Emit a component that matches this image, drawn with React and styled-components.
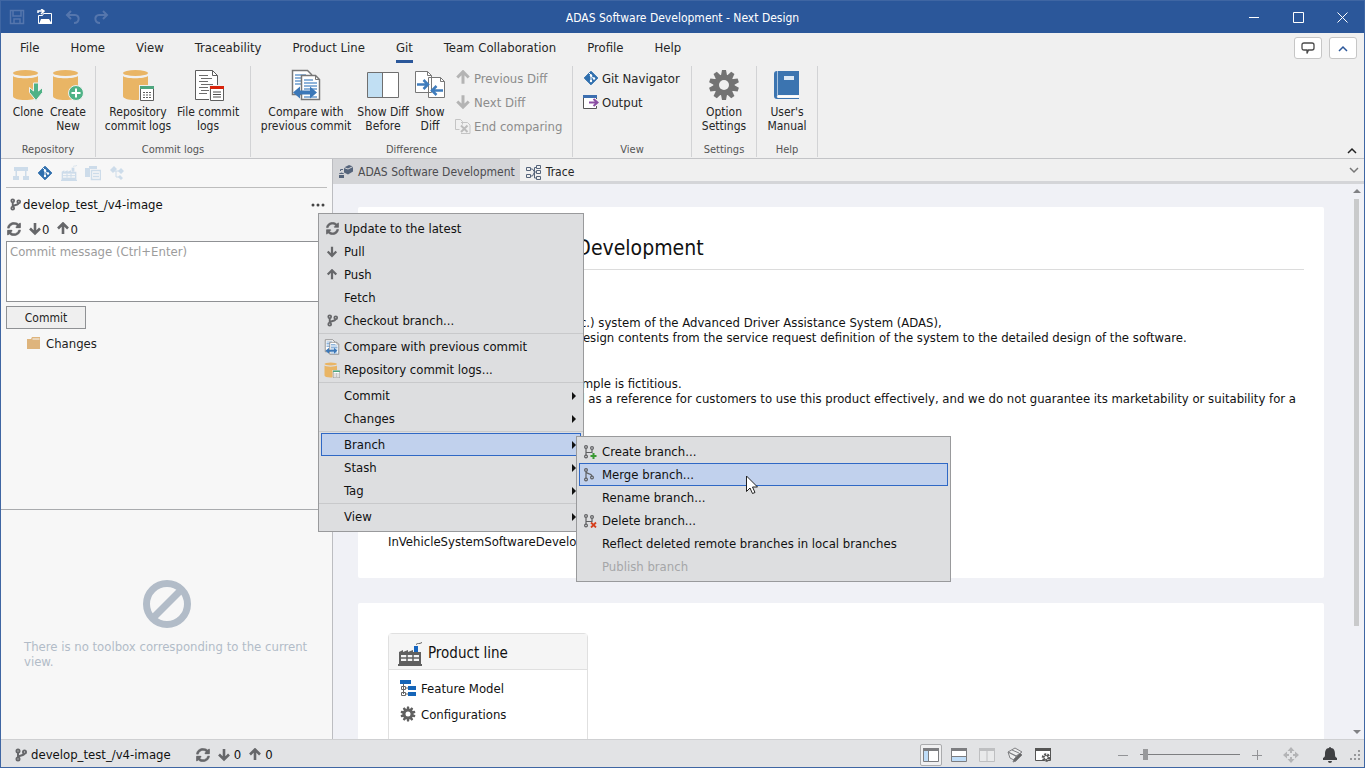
import React, {useState} from 'react';
import styled, {createGlobalStyle, css} from 'styled-components';

const GlobalStyle = createGlobalStyle`
    * {
        box-sizing: border-box;
    }
    body {
        margin: 0;
        font-family: "DejaVu Sans Condensed", "Open Sans", sans-serif;
        font-size: 13px;
        line-height: 15px;
        color: #1e1e1e;
    }
    button, input, textarea {
        font: inherit;
        color: inherit;
    }
    button {
        padding: 0;
        border: 0;
        background: none;
    }
    svg {
        display: block;
        flex: none;
    }
`;

/*********************************************
 window frame and title bar
 ********************************************/
const Window = styled.div`
    display: flex;
    flex-direction: column;
    height: 100vh;
    border: 1px solid #3f66a3;
    background: #f0f0f0;
    overflow: hidden;
`;

const TitleBar = styled.header`
    display: grid;
    grid-template-columns: 1fr auto 1fr;
    align-items: center;
    height: 32px;
    flex: none;
    background: #2b579a;
    color: white;
`;

const QuickAccess = styled.div`
    display: flex;
    gap: 12px;
    padding-left: 8px;
`;

const WindowTitle = styled.div`
    padding-top: 2px;
    font-size: 12px;
`;

const WindowButtons = styled.div`
    display: flex;
    justify-content: flex-end;
`;

const WindowButton = styled.button`
    display: flex;
    align-items: center;
    justify-content: center;
    width: 44px;
    height: 32px;
`;

/*********************************************
 ribbon
 ********************************************/
const MenuBar = styled.nav`
    display: flex;
    align-items: center;
    height: 30px;
    flex: none;
    padding: 0 7px 0 19px;
    gap: 31px;
`;

const MenuTab = styled.a`
    height: 30px;
    line-height: 29px;
    color: #262626;
    text-decoration: none;
    border-bottom: 3px solid ${({$active}) => $active ? '#2b579a' : 'transparent'};
`;

const MenuBarTools = styled.div`
    display: flex;
    gap: 7px;
    margin-left: auto;
`;

const RoundButton = styled.button`
    display: flex;
    align-items: center;
    justify-content: center;
    width: 28px;
    height: 22px;
    border: 1px solid #c6c6c6;
    border-radius: 3px;
    background: white;
`;

const Ribbon = styled.div`
    display: flex;
    height: 96px;
    flex: none;
    padding-top: 3px;
    border-bottom: 1px solid #c3c4c7;
`;

const RibbonGroup = styled.section`
    display: flex;
    flex-direction: column;
    width: ${({$width}) => $width}px;
    height: 91px;
    border-right: 1px solid #d2d3d5;
`;

const GroupContent = styled.div`
    display: flex;
    justify-content: center;
    flex: 1;
`;

const GroupLabel = styled.div`
    text-align: center;
    font-size: 11px;
    color: #555;
`;

const BigButton = styled.button`
    display: flex;
    flex-direction: column;
    align-items: center;
    align-self: flex-start;
    gap: 4px;
    width: ${({$width}) => $width}px;
    padding-top: 3px;
    font-size: 12px;
    line-height: 14px;
    white-space: pre;
    color: #262626;
`;

const SmallButtons = styled.div`
    display: flex;
    flex-direction: column;
    flex: 1;
    padding-left: ${({$indent}) => $indent || 0}px;
`;

const SmallButton = styled.button`
    display: flex;
    align-items: center;
    gap: 3px;
    height: 24px;
    white-space: nowrap;
    color: #262626;

    &:disabled {
        color: #8c8c8c;
    }
`;

const RibbonCollapse = styled.button`
    align-self: flex-end;
    margin: 0 7px 4px auto;
`;

/*********************************************
 left panel
 ********************************************/
const Body = styled.div`
    display: flex;
    flex: 1;
    min-height: 0;
`;

const SidePanel = styled.aside`
    display: flex;
    flex-direction: column;
    width: 332px;
    flex: none;
    border-right: 1px solid #bcbdc1;
    background: #f7f7f7;
`;

const PanelTop = styled.div`
    height: 351px;
    flex: none;
    padding: 0 5px;
    border-bottom: 1px solid #a9abae;
`;

const PanelTabs = styled.div`
    display: flex;
    align-items: center;
    gap: 8px;
    height: 29px;
    padding-left: 7px;
    border-bottom: 1px solid #bdbdbd;
`;

const BranchRow = styled.div`
    position: relative;
    display: flex;
    align-items: center;
    gap: 1px;
    height: 33px;
    padding: 0 1px 0 3px;
    color: #111;
`;

const MoreButton = styled.button`
    margin-left: auto;
    padding-right: 1px;
`;

const SyncRow = styled.div`
    display: flex;
    align-items: center;
    gap: 7px;
    height: 16px;
    margin-bottom: 4px;
    padding-left: 1px;
`;

const SyncItem = styled.span`
    display: flex;
    align-items: center;
    gap: ${({$gap}) => $gap || 0}px;
`;

const CommitMessage = styled.textarea`
    display: block;
    width: 100%;
    height: 61px;
    padding: 2px 3px;
    border: 1px solid #8f9194;
    background: white;
    resize: none;

    &::placeholder {
        color: #9c9c9c;
    }
`;

const CommitButton = styled.button`
    display: block;
    width: 80px;
    height: 23px;
    margin-top: 4px;
    padding-top: 2px;
    border: 1px solid #8f9194;
    background: #efefef;
    font-size: 12px;
`;

const ChangesRow = styled.div`
    display: flex;
    align-items: center;
    gap: 5px;
    height: 28px;
    padding-left: 21px;
`;

const Toolbox = styled.div`
    display: flex;
    flex-direction: column;
    align-items: center;
    gap: 11px;
    padding: 70px 20px 0 20px;
    color: #b2bcc8;
`;

const ToolboxNote = styled.div`
    width: 100%;
    padding-left: 3px;
`;

/*********************************************
 editor area
 ********************************************/
const Editor = styled.main`
    display: flex;
    flex-direction: column;
    flex: 1;
    min-width: 0;
    background: #f0f1f6;
`;

const TabStrip = styled.div`
    display: flex;
    align-items: center;
    height: 25px;
    flex: none;
    border-top: 1px solid #f0f0f0;
    border-bottom: 3px solid #d4d5d8;
    background: #f0f0f0;
`;

const EditorTab = styled.button`
    display: flex;
    align-items: center;
    gap: 5px;
    height: 23px;
    padding: 3px 5px 0 6px;
    font-size: 12px;
    color: ${({$active}) => $active ? '#4c4c50' : '#262626'};
    background: ${({$active}) => $active ? '#d4d5d8' : 'transparent'};
`;

const TabListButton = styled.button`
    margin-left: auto;
    padding-right: 5px;
`;

const EditorView = styled.div`
    display: flex;
    flex: 1;
    min-height: 0;
`;

const Pages = styled.div`
    flex: 1;
    min-width: 0;
    padding: 23px 25px 0;
    overflow: hidden;
`;

const Page = styled.article`
    height: 371px;
    margin-bottom: 25px;
    padding: 30px 20px 0 30px;
    border-radius: 2px;
    background: white;
    color: #111;
`;

const PageTitle = styled.h1`
    margin: 0 0 45px;
    padding: 1px 0 10px;
    border-bottom: 1px solid #dcdcdc;
    font-size: 21px;
    line-height: 21px;
    font-weight: 400;
`;

const Paragraph = styled.p`
    margin: 0 0 ${({$gap}) => $gap || 31}px;
    white-space: pre-line;
`;

const Card = styled.section`
    width: 200px;
    height: 140px;
    border: 1px solid #e0e0e0;
    border-radius: 4px;
`;

const CardHeader = styled.h2`
    display: flex;
    align-items: center;
    gap: 6px;
    height: 36px;
    margin: 0 0 5px;
    padding: 4px 9px 0;
    border-bottom: 1px solid #e0e0e0;
    background: #f5f5f5;
    font-size: 15px;
    font-weight: 400;
`;

const CardLink = styled.a`
    display: flex;
    align-items: center;
    gap: 5px;
    height: 26px;
    padding-left: 11px;
    color: inherit;
    text-decoration: none;
`;

const ScrollBar = styled.div`
    display: flex;
    flex-direction: column;
    align-items: center;
    width: 15px;
    padding: 5px 0;
`;

const ScrollThumb = styled.div`
    width: 5px;
    flex: 0 1 427px;
    margin: 6px 0 auto;
    background: #c9cacb;
`;

/*********************************************
 context menus
 ********************************************/
const menuBox = css`
    position: absolute;
    padding: 3px 2px;
    border: 1px solid #999a9c;
    background: #dddee0;
    list-style: none;
    margin: 0;
    z-index: 1;
`;

const ContextMenu = styled.ul`
    ${menuBox}
    top: 25px;
    left: 312px;
    width: 266px;
`;

const SubMenu = styled.ul`
    ${menuBox}
    top: 3px;
    left: 255px;
    width: 375px;
`;

const MenuEntry = styled.li`
    position: relative;
`;

const MenuButton = styled.button`
    display: grid;
    grid-template-columns: 22px 1fr 8px;
    align-items: center;
    width: 100%;
    height: 23px;
    border: 1px solid ${({$active}) => $active ? '#2f68c5' : 'transparent'};
    background: ${({$active}) => $active ? '#c1d1ed' : 'transparent'};
    text-align: left;
    white-space: nowrap;
    color: #111;

    &:disabled {
        color: #a5a6a8;
    }
`;

const MenuIcon = styled.span`
    display: flex;
    justify-content: center;
    width: 20px;
`;

const MenuSeparator = styled.li`
    height: 1px;
    margin: 1px -2px;
    background: #c8c9cb;
`;

const Pointer = styled.svg`
    position: absolute;
    top: 12px;
    left: 167px;
    z-index: 2;
`;

/*********************************************
 status bar
 ********************************************/
const StatusBar = styled.footer`
    display: flex;
    align-items: center;
    height: 28px;
    flex: none;
    padding: 2px 0 0 13px;
    border-top: 1px solid #cfd0d2;
    background: #e2e3e5;
    color: #111;
`;

const StatusGroup = styled.div`
    display: flex;
    align-items: center;
    gap: ${({$gap}) => $gap}px;
    margin-left: ${({$push}) => $push}px;
`;

const StatusBranch = styled.span`
    margin-left: 3px;
`;

const ViewButtons = styled.div`
    display: flex;
    margin-left: auto;
    gap: 6px;
`;

const ViewButton = styled.button`
    display: flex;
    align-items: center;
    justify-content: center;
    width: 22px;
    height: 22px;
    border: 1px solid ${({$active}) => $active ? '#aaabad' : 'transparent'};
    border-radius: 2px;
    background: ${({$active}) => $active ? '#f0f0f1' : 'transparent'};
`;

const ZoomSlider = styled.input`
    appearance: none;
    width: 100px;
    height: 12px;
    margin: 0 12px;
    background: linear-gradient(#7d7e80, #7d7e80) center / 100% 1px no-repeat;

    &::-webkit-slider-thumb {
        appearance: none;
        width: 5px;
        height: 11px;
        background: #98999b;
    }
`;

/*********************************************
 icons
 ********************************************/
const BranchIcon = ({size = 14}) => (
    <svg width={size} height={size} viewBox="0 0 14 14" fill="#66676a" stroke="#66676a" strokeWidth="2">
        <circle cx="4" cy="3" r="1.500"/>
        <circle cx="4" cy="11" r="1.500"/>
        <circle cx="10.500" cy="4" r="1.500"/>
        <path d="M4 3v8M10.500 5c0 3-5 2-6.500 4" fill="none"/>
        <path d="M3.500 2.500h1v1h-1zM10 3.500h1v1h-1zM3.500 10.500h1v1h-1z" fill="#e8e8e8" stroke="none"/>
    </svg>
);

const SyncIcon = ({size = 14}) => (
    <svg width={size} height={size} viewBox="0 0 512 512" fill="#66676a" stroke="#66676a" strokeWidth="14">
        <path d="M370.7 133.3C339.500 104 298.900 88 255.800 88c-77.500.1-144.300 53.200-162.800 126.900-1.300 5.400-6.100 9.200-11.700 9.200H24.100c-7.500 0-13.200-6.800-11.800-14.200C33.900 94.900 134.800 8 256 8c66.400 0 126.800 26.100 171.300 68.700L463 41c15.100-15.100 41-4.400 41 17v134c0 13.300-10.700 24-24 24H346c-21.400 0-32.100-25.900-17-41l41.700-41.700zM32 296h134c21.400 0 32.100 25.900 17 41l-41.800 41.800c31.300 29.300 71.800 45.300 114.900 45.200 77.400-.1 144.300-53.100 162.800-126.800 1.300-5.400 6.100-9.200 11.700-9.200h57.300c7.500 0 13.200 6.800 11.800 14.200C478.100 417.100 377.200 504 256 504c-66.400 0-126.800-26.100-171.300-68.700L49 471c-15.100 15.100-41 4.400-41-17V320c0-13.300 10.700-24 24-24z"/>
    </svg>
);

const ArrowIcon = ({up, size = 14, color = '#66676a'}) => (
    <svg width={size} height={size} viewBox="0 0 14 14" fill="none" stroke={color} strokeWidth="2.600">
        <path d={up ? 'M7 12V1M2 6.500l5-5 5 5' : 'M7 1v11M2 6.500l5 5 5-5'}/>
    </svg>
);

const Cylinder = ({children, size = 32}) => (
    <svg width={size} height={size} viewBox="0 0 32 32">
        <path d="M1 7v20c0 2.500 5 4 12 4s13-1.500 13-4V7c-3 3-23 3-25 0z" fill="#e9b565"/>
        <ellipse cx="13.500" cy="4" rx="12.500" ry="3" fill="#e9b565"/>
        {children}
    </svg>
);

const CloneIcon = () => (
    <Cylinder>
        <path d="M21.500 14h5v8l4-3.500v5L24 31.500 17.500 23.500v-5l4 3.500z" fill="#4fb286" stroke="#f0f0f0"/>
    </Cylinder>
);

const CreateIcon = () => (
    <Cylinder>
        <circle cx="24" cy="24" r="7.500" fill="#4fb286" stroke="#f0f0f0"/>
        <path d="M24 19.500v9M19.500 24h9" stroke="white" strokeWidth="2"/>
    </Cylinder>
);

const LogTable = ({color}) => (
    <g>
        <path d="M17 16h15v16H17z" fill="#f0f0f0"/>
        <path d="M18.500 18.500h13v13h-13z" fill="white" stroke="#5d5d5d"/>
        <path d="M18 17h14v3H18z" fill={color}/>
    </g>
);

const RepoLogIcon = ({size}) => (
    <Cylinder size={size}>
        <LogTable color="#4fa67f"/>
        <path d="M21 23.500h9M21 26h9M21 28.500h9" stroke="#5d5d5d" strokeDasharray="2 1"/>
    </Cylinder>
);

const FileLogIcon = () => (
    <svg width="32" height="32" viewBox="0 0 32 32">
        <path d="M3.500 1.500h17l5 5v24h-22z" fill="white" stroke="#5d5d5d"/>
        <path d="M20.500 1.500v5h5" fill="none" stroke="#5d5d5d"/>
        <path d="M7 6.500h9M9 9.500h11M7 12.500h9M9 15.500h12M7 18.500h9M9 21.500h8M7 24.500h8" stroke="#6c6c6c"/>
        <LogTable color="#d8230b"/>
        <path d="M21 23h8M21 25.500h8M21 28h8" stroke="#4d4d4d"/>
    </svg>
);

const CompareIcon = ({size = 32}) => (
    <svg width={size} height={size} viewBox="0 0 32 32">
        <path d="M2.500 1.500h15l4 4v20h-19z" fill="white" stroke="#777" strokeWidth="1.500"/>
        <path d="M5 6h11M5 9h11M5 12h8M5 15h8" stroke="#8fb4da" strokeWidth="2"/>
        <path d="M11.500 6.500h14l4 4v20h-18z" fill="white" stroke="#777" strokeWidth="1.500"/>
        <path d="M25.500 6.500v4h4" fill="none" stroke="#777"/>
        <path d="M14 11h9M14 14h13M14 17h13M14 20h13M14 28h13" stroke="#8fb4da" strokeWidth="2"/>
        <path d="M3 23.500l7-6v4h10v-4l7 6-7 6v-4H10v4z" fill="#3c78b8"/>
    </svg>
);

const DiffBeforeIcon = () => (
    <svg width="32" height="32" viewBox="0 0 32 32">
        <path d="M.5 3.500h31v25H.5z" fill="white" stroke="#6f6f6f"/>
        <path d="M1 4h15v24H1z" fill="#c1dff3"/>
        <path d="M15.500 3.500v25" stroke="#6f6f6f"/>
    </svg>
);

const ShowDiffIcon = () => (
    <svg width="32" height="32" viewBox="0 0 32 32">
        <path d="M1.500 2.500h12l4 4v17h-16zM14.500 8.500h12l4 4v16h-16z" fill="white" stroke="#777"/>
        <path d="M13.500 2.500v4h4M26.500 8.500v4h4" fill="none" stroke="#777"/>
        <path d="M3 15.500h10M9.500 11l4.500 4.500L9.500 20M29 21.500H19M22.500 17L18 21.500l4.500 4.500" fill="none" stroke="#3f7cbc" strokeWidth="2.500"/>
    </svg>
);

const EndCompareIcon = () => (
    <svg width="16" height="16" viewBox="0 0 16 16" fill="none" stroke="#c4c4c4">
        <path d="M.5 11.500V1.500h5l2 2v3M.5 11.500h4M6 4.500h6.500l2.500 2.500v8.500h-9"/>
        <path d="M6 7.500l6.500 6.500M12.500 7.500L6 14" stroke="#bcbcbc" strokeWidth="2"/>
    </svg>
);

const GitIcon = ({size = 16}) => (
    <svg width={size} height={size} viewBox="0 0 16 16">
        <path d="M8 1.200L14.800 8 8 14.800 1.200 8z" fill="#2f6fae" stroke="#2f6fae" strokeLinejoin="round"/>
        <path d="M6 3l2 2v6M8 6l3 2.500" fill="none" stroke="white"/>
        <circle cx="8" cy="5.500" r="1.200" fill="white"/>
        <circle cx="8" cy="11" r="1.200" fill="white"/>
        <circle cx="11" cy="8.500" r="1.200" fill="white"/>
    </svg>
);

const OutputIcon = () => (
    <svg width="16" height="16" viewBox="0 0 16 16">
        <path d="M.5 2.500h13v12H.5z" fill="white" stroke="#555"/>
        <path d="M0 1h14v3H0z" fill="#3c6fb0"/>
        <path d="M11 5h4v7h-4z" fill="#f0f0f0"/>
        <path d="M6 8.500h8M10.500 5l4 3.500-4 3.500" fill="none" stroke="#8a4ea3" strokeWidth="2"/>
    </svg>
);

const GearIcon = ({size = 32, color = '#737373', hole = '#f0f0f0'}) => (
    <svg width={size} height={size} viewBox="0 0 32 32">
        {[0, 36, 72, 108, 144, 180, 216, 252, 288, 324].map(angle =>
            <path key={angle} d="M14 1h4l1.500 8h-7z" fill={color} transform={`rotate(${angle} 16 16)`}/>
        )}
        <circle cx="16" cy="16" r="10.500" fill={color}/>
        <circle cx="16" cy="16" r="5" fill={hole}/>
    </svg>
);

const BookIcon = () => (
    <svg width="32" height="32" viewBox="0 0 32 32">
        <path d="M6 2h22v24H7c-1.500 0-1.500 3 0 3h21v1H6c-2 0-3-1-3-3V5c0-2 1-3 3-3z" fill="#3b74b0"/>
        <path d="M7 26.500h21v2H7z" fill="white"/>
        <path d="M6.500 2v24" stroke="#a9c4e0"/>
        <path d="M13 7h10v4H13z" fill="#dbe8f5"/>
    </svg>
);

const ChevronIcon = ({down, color = '#333'}) => (
    <svg width="10" height="7" viewBox="0 0 10 7" fill="none" stroke={color} strokeWidth="1.500">
        <path d={down ? 'M1 1l4 4 4-4' : 'M1 6l4-4 4 4'}/>
    </svg>
);

const FactoryIcon = ({size = 24, color = '#606060', chimney = '#1565c0', hole = '#f5f5f5'}) => (
    <svg width={size} height={size} viewBox="0 0 24 24">
        <path d="M0 24v-2h1V10l4-2v2l5-2v2l5-2v2h8v12h1v2z" fill={color}/>
        <path d="M3 13h18v6H3z" fill={hole}/>
        <path d="M3 16h18M9 13v6M15 13v6" stroke={color} strokeWidth="1.500"/>
        <path d="M16 4h4v6h-4z" fill={chimney}/>
        <path d="M18 2.500c2-2 3 0 6-2" fill="none" stroke={color}/>
    </svg>
);

const TreeIcon = () => (
    <svg width="16" height="16" viewBox="0 0 16 16" fill="#cddcea">
        <path d="M1 2h14v4H1zM0 11h6v4H0zM10 11h6v4h-6zM2.500 6H4v5H2.500zM12 6h1.500v5H12z"/>
    </svg>
);

const ReportIcon = () => (
    <svg width="16" height="16" viewBox="0 0 16 16">
        <path d="M0 3h4V1h8v3H5v8H0z" fill="#cddcea"/>
        <path d="M6.500 5.500h9v9h-9zM8 8.500h6M8 11.500h6" fill="none" stroke="#cddcea" strokeWidth="1.500"/>
    </svg>
);

const NodesIcon = () => (
    <svg width="16" height="16" viewBox="0 0 16 16" fill="#cddcea">
        <path d="M1 5l4-4 3 3-4 4zM9 6l3-3 3 3-3 3zM9 12l2-2 3 3-2 2z"/>
        <path d="M5 6h5M7 6v6h4" fill="none" stroke="#cddcea"/>
    </svg>
);

const FolderIcon = () => (
    <svg width="14" height="12" viewBox="0 0 14 12" fill="#deb47c">
        <path d="M0 2h4l1-2h8v12H0z"/>
        <path d="M5.500 2h7" stroke="#f7f7f7"/>
    </svg>
);

const ForbidIcon = () => (
    <svg width="48" height="48" viewBox="0 0 48 48" fill="none" stroke="#b2bcc8" strokeWidth="7">
        <circle cx="24" cy="24" r="20.500"/>
        <path d="M38 10L10 38"/>
    </svg>
);

const ModelIcon = () => (
    <svg width="14" height="14" viewBox="0 0 14 14" fill="#55647b">
        <path d="M5 2.500L10 0l4 1.500v5L9 9.500l-4-2z"/>
        <path d="M5 2.500l4 1.500 5-2.500" fill="none" stroke="#d4d5d8"/>
        <path d="M0 8.500L2.500 7.500 5 8.500v4.500H0z"/>
        <path d="M0 9.500h5" stroke="#d4d5d8"/>
        <path d="M1.500 6V4.500H4" fill="none" stroke="#55647b"/>
    </svg>
);

const TraceIcon = () => (
    <svg width="15" height="15" viewBox="0 0 15 15" fill="none" stroke="#55647b">
        <path d="M.5 2.500h4v3h-4zM.5 9.500h4v3h-4zM10.500.5h4v3h-4zM10.500 5.500h4v3h-4zM10.500 11.500h4v3h-4zM4.500 4h2l2 3h2M4.500 11h2l2-4M8.500 7V2.500h2M8.500 7v6h2"/>
    </svg>
);

const GitBranchIcon = ({mark, merge}) => (
    <svg width="14" height="14" viewBox="0 0 14 14" fill="none" stroke="#5f6062" strokeWidth="1.200">
        <circle cx="3" cy="2" r="1.400"/>
        <circle cx="3" cy="11.500" r="1.400"/>
        <circle cx="9" cy={merge ? 9.500 : 3} r="1.400"/>
        <path d={merge ? 'M3 3.500V10M3 3.500c0 3 5 1 6 4.500' : 'M3 3.500V10M9 4.500v3H3'}/>
        {mark === 'plus' && <path d="M10.500 8v6M7.500 11h6" stroke="#3a9a34" strokeWidth="2"/>}
        {mark === 'cross' && <path d="M8 8.500l5 5M13 8.500l-5 5" stroke="#d5401e" strokeWidth="1.800"/>}
    </svg>
);

const FeatureIcon = () => (
    <svg width="16" height="16" viewBox="0 0 16 16">
        <path d="M3.500 4v10M5 8h3M5 14h3M1.500 6.500h4v3h-4zM1.500 12.500h4v3h-4z" fill="white" stroke="#666"/>
        <path d="M0 0h11v4H0zM8 6h8v4H8zM8 12h8v4H8z" fill="#1565b8"/>
    </svg>
);

const LayoutIcon = ({children, color = '#7c7d80'}) => (
    <svg width="16" height="14" viewBox="0 0 16 14">
        <path d="M.5.5h15v13H.5z" fill="white" stroke={color}/>
        {children}
        <path d="M0 0h16v3H0z" fill={color}/>
    </svg>
);

/*********************************************
 data
 ********************************************/
const menuTabs = ['File', 'Home', 'View', 'Traceability', 'Product Line', 'Git', 'Team Collaboration', 'Profile', 'Help'];

const branchMenu = [
    {label: 'Create branch...', icon: <GitBranchIcon mark="plus"/>},
    {label: 'Merge branch...', icon: <GitBranchIcon merge/>},
    {label: 'Rename branch...'},
    {label: 'Delete branch...', icon: <GitBranchIcon mark="cross"/>},
    {label: 'Reflect deleted remote branches in local branches'},
    {label: 'Publish branch', disabled: true},
];

const gitMenu = [
    {label: 'Update to the latest', icon: <SyncIcon size={13}/>},
    {label: 'Pull', icon: <ArrowIcon size={12}/>},
    {label: 'Push', icon: <ArrowIcon up size={12}/>},
    {label: 'Fetch'},
    {label: 'Checkout branch...', icon: <BranchIcon size={13}/>},
    null,
    {label: 'Compare with previous commit', icon: <CompareIcon size={16}/>},
    {label: 'Repository commit logs...', icon: <RepoLogIcon size={16}/>},
    null,
    {label: 'Commit', more: true},
    {label: 'Changes', more: true},
    null,
    {label: 'Branch', more: true, items: branchMenu},
    {label: 'Stash', more: true},
    {label: 'Tag', more: true},
    null,
    {label: 'View', more: true},
];

const Entry = ({item, active, onEnter, children}) => (
    <MenuEntry onMouseEnter={onEnter}>
        <MenuButton $active={active} disabled={item.disabled}>
            <MenuIcon>{item.icon}</MenuIcon>
            <span>{item.label}</span>
            {item.more && <svg width="4" height="8" viewBox="0 0 4 8"><path d="M0 0l4 4-4 4z" fill="#111"/></svg>}
        </MenuButton>
        {children}
    </MenuEntry>
);

const GitContextMenu = () => {
    const [open, setOpen] = useState('Branch');
    const [current, setCurrent] = useState('Merge branch...');

    return (
        <ContextMenu>
            {gitMenu.map((item, i) => item ? (
                <Entry key={item.label} item={item} active={open === item.label}
                       onEnter={() => setOpen(item.label)}>
                    {item.items && open === item.label && (
                        <SubMenu>
                            {item.items.map(sub => (
                                <Entry key={sub.label} item={sub} active={current === sub.label}
                                       onEnter={() => setCurrent(sub.label)}>
                                    {current === sub.label && (
                                        <Pointer width="12" height="20" viewBox="0 0 12 20">
                                            <path d="M.5 1v15.500l3.500-3.500 2.500 5.500 2.500-1-2.500-5.500h5z" fill="white" stroke="#222"/>
                                        </Pointer>
                                    )}
                                </Entry>
                            ))}
                        </SubMenu>
                    )}
                </Entry>
            ) : <MenuSeparator key={i}/>)}
        </ContextMenu>
    );
};

const Header = () => (
    <TitleBar>
        <QuickAccess>
            <svg width="16" height="16" viewBox="0 0 16 16" fill="none" stroke="#5576ad" strokeWidth="1.500">
                <path d="M1.500 1.500h13v13h-13zM4 2v5h8V2M5 14v-4h6v4"/>
            </svg>
            <svg width="16" height="16" viewBox="0 0 16 16">
                <path d="M1.500 14.500v-8h4l1-2h8v10z" fill="none" stroke="white"/>
                <path d="M2 15l2-5h8l3 5z" fill="white"/>
                <path d="M1 4V2h5M4 0l3 2-3 3" fill="none" stroke="white" strokeWidth="1.500"/>
            </svg>
            <svg width="16" height="16" viewBox="0 0 16 16" fill="none" stroke="#5576ad" strokeWidth="2">
                <path d="M6 2L2 6l4 4M2 6h8c5 0 5 8-1 8"/>
            </svg>
            <svg width="16" height="16" viewBox="0 0 16 16" fill="none" stroke="#5576ad" strokeWidth="2">
                <path d="M10 2l4 4-4 4M14 6H6C1 6 1 14 7 14"/>
            </svg>
        </QuickAccess>
        <WindowTitle>ADAS Software Development - Next Design</WindowTitle>
        <WindowButtons>
            {['M0 5.500h10', 'M.5.500h10v10H.5z', 'M.5.500l10 10M10.500.500l-10 10'].map(d => (
                <WindowButton key={d}>
                    <svg width="11" height="11" viewBox="0 0 11 11" fill="none" stroke="white"><path d={d}/></svg>
                </WindowButton>
            ))}
        </WindowButtons>
    </TitleBar>
);

const RibbonArea = () => (
    <>
        <MenuBar>
            {menuTabs.map(tab => <MenuTab key={tab} href="#" $active={tab === 'Git'}>{tab}</MenuTab>)}
            <MenuBarTools>
                <RoundButton aria-label="Feedback">
                    <svg width="14" height="13" viewBox="0 0 14 13" fill="none" stroke="#4a4a4a" strokeWidth="1.300">
                        <path d="M3 1h8q2 0 2 2v3q0 2-2 2H7.500L6 11.500V8H3Q1 8 1 6V3q0-2 2-2z"/>
                    </svg>
                </RoundButton>
                <RoundButton aria-label="Minimize ribbon"><ChevronIcon color="#2b579a"/></RoundButton>
            </MenuBarTools>
        </MenuBar>
        <Ribbon>
            <RibbonGroup $width={95}>
                <GroupContent>
                    <BigButton $width={40}><CloneIcon/>Clone</BigButton>
                    <BigButton $width={40}><CreateIcon/>{'Create\nNew'}</BigButton>
                </GroupContent>
                <GroupLabel>Repository</GroupLabel>
            </RibbonGroup>
            <RibbonGroup $width={155}>
                <GroupContent>
                    <BigButton $width={70}><RepoLogIcon/>{'Repository\ncommit logs'}</BigButton>
                    <BigButton $width={70}><FileLogIcon/>{'File commit\nlogs'}</BigButton>
                </GroupContent>
                <GroupLabel>Commit logs</GroupLabel>
            </RibbonGroup>
            <RibbonGroup $width={322}>
                <GroupContent>
                    <BigButton $width={110}><CompareIcon/>{'Compare with\nprevious commit'}</BigButton>
                    <BigButton $width={44}><DiffBeforeIcon/>{'Show Diff\nBefore'}</BigButton>
                    <BigButton $width={50}><ShowDiffIcon/>{'Show\nDiff'}</BigButton>
                    <SmallButtons>
                        <SmallButton disabled><ArrowIcon up size={16} color="#b4b4b4"/>Previous Diff</SmallButton>
                        <SmallButton disabled><ArrowIcon size={16} color="#b4b4b4"/>Next Diff</SmallButton>
                        <SmallButton disabled><EndCompareIcon/>End comparing</SmallButton>
                    </SmallButtons>
                </GroupContent>
                <GroupLabel>Difference</GroupLabel>
            </RibbonGroup>
            <RibbonGroup $width={119}>
                <GroupContent>
                    <SmallButtons $indent={10}>
                        <SmallButton><GitIcon/>Git Navigator</SmallButton>
                        <SmallButton><OutputIcon/>Output</SmallButton>
                    </SmallButtons>
                </GroupContent>
                <GroupLabel>View</GroupLabel>
            </RibbonGroup>
            <RibbonGroup $width={65}>
                <GroupContent>
                    <BigButton $width={60}><GearIcon/>{'Option\nSettings'}</BigButton>
                </GroupContent>
                <GroupLabel>Settings</GroupLabel>
            </RibbonGroup>
            <RibbonGroup $width={61}>
                <GroupContent>
                    <BigButton $width={56}><BookIcon/>{'User\'s\nManual'}</BigButton>
                </GroupContent>
                <GroupLabel>Help</GroupLabel>
            </RibbonGroup>
            <RibbonCollapse aria-label="Collapse"><ChevronIcon color="#222"/></RibbonCollapse>
        </Ribbon>
    </>
);

const GitPanel = () => (
    <SidePanel>
        <PanelTop>
            <PanelTabs>
                <TreeIcon/>
                <GitIcon/>
                <FactoryIcon size={16} color="#cddcea" chimney="#cddcea" hole="#f7f7f7"/>
                <ReportIcon/>
                <NodesIcon/>
            </PanelTabs>
            <BranchRow>
                <BranchIcon size={13}/>
                develop_test_/v4-image
                <MoreButton aria-label="More">
                    <svg width="14" height="4" viewBox="0 0 14 4" fill="#444">
                        <circle cx="2" cy="2" r="1.500"/>
                        <circle cx="7" cy="2" r="1.500"/>
                        <circle cx="12" cy="2" r="1.500"/>
                    </svg>
                </MoreButton>
                <GitContextMenu/>
            </BranchRow>
            <SyncRow>
                <SyncItem><SyncIcon/></SyncItem>
                <SyncItem><ArrowIcon/>0</SyncItem>
                <SyncItem><ArrowIcon up/>0</SyncItem>
            </SyncRow>
            <CommitMessage placeholder="Commit message (Ctrl+Enter)" aria-label="Commit message"/>
            <CommitButton>Commit</CommitButton>
            <ChangesRow><FolderIcon/>Changes</ChangesRow>
        </PanelTop>
        <Toolbox>
            <ForbidIcon/>
            <ToolboxNote>There is no toolbox corresponding to the current view.</ToolboxNote>
        </Toolbox>
    </SidePanel>
);

const EditorArea = () => (
    <Editor>
        <TabStrip>
            <EditorTab $active><ModelIcon/>ADAS Software Development</EditorTab>
            <EditorTab><TraceIcon/>Trace</EditorTab>
            <TabListButton aria-label="Tabs"><ChevronIcon down color="#777"/></TabListButton>
        </TabStrip>
        <EditorView>
            <Pages>
                <Page>
                    <PageTitle>The ADAS Software Development</PageTitle>
                    <Paragraph>{'This is a sample models (ACC, etc.) system of the Advanced Driver Assistance System (ADAS),\nand we describe a set of all the design contents from the service request definition of the system to the detailed design of the software.'}</Paragraph>
                    <Paragraph $gap={113}>{'The contents described in this sample is fictitious.\nThis sample models is distributed as a reference for customers to use this product effectively, and we do not guarantee its marketability or suitability for a particular purpose.'}</Paragraph>
                    <Paragraph>InVehicleSystemSoftwareDevelopment</Paragraph>
                </Page>
                <Page>
                    <Card>
                        <CardHeader><FactoryIcon/>Product line</CardHeader>
                        <CardLink href="#"><FeatureIcon/>Feature Model</CardLink>
                        <CardLink href="#"><GearIcon size={16} color="#606060" hole="white"/>Configurations</CardLink>
                    </Card>
                </Page>
            </Pages>
            <ScrollBar>
                <svg width="8" height="4" viewBox="0 0 8 4"><path d="M0 4l4-4 4 4z" fill="#808184"/></svg>
                <ScrollThumb/>
                <svg width="8" height="4" viewBox="0 0 8 4"><path d="M0 0h8L4 4z" fill="#808184"/></svg>
            </ScrollBar>
        </EditorView>
    </Editor>
);

const Status = () => (
    <StatusBar>
        <BranchIcon/>
        <StatusBranch>develop_test_/v4-image</StatusBranch>
        <StatusGroup $gap={7} $push={25}>
            <SyncIcon/>
            <SyncItem $gap={3}><ArrowIcon/>0</SyncItem>
            <SyncItem $gap={3}><ArrowIcon up/>0</SyncItem>
        </StatusGroup>
        <ViewButtons>
            <ViewButton $active aria-label="Left panel">
                <LayoutIcon><path d="M1 3h4v10H1z" fill="#bfddf8"/><path d="M5.500 3v10" stroke="#7c7d80"/></LayoutIcon>
            </ViewButton>
            <ViewButton aria-label="Bottom panel">
                <LayoutIcon><path d="M1 9h14v4H1z" fill="#bfddf8"/><path d="M1 8.500h14" stroke="#7c7d80"/></LayoutIcon>
            </ViewButton>
            <ViewButton aria-label="Split" disabled>
                <LayoutIcon color="#bebfc1"><path d="M1 3h14v10H1z" fill="#e9eaeb"/><path d="M8 3v10" stroke="#bebfc1"/></LayoutIcon>
            </ViewButton>
            <ViewButton aria-label="Edit model">
                <svg width="16" height="16" viewBox="0 0 16 16" fill="#ededed" stroke="#808184">
                    <path d="M1 5l7-4 7 4-6 4zM1 5l8 4v5l-6-3zM5 3l7 3"/>
                    <path d="M6 15l1-3 6-6 2 2-6 6z" fill="#666"/>
                </svg>
            </ViewButton>
            <ViewButton aria-label="View settings">
                <svg width="16" height="14" viewBox="0 0 16 14" fill="white" stroke="#555">
                    <path d="M.5.500h15v12H.5z"/>
                    <path d="M0 1.500h16" strokeWidth="3"/>
                    <circle cx="11" cy="9.500" r="3" strokeWidth="2.500" strokeDasharray="2 1"/>
                    <circle cx="11" cy="9.500" r="2"/>
                </svg>
            </ViewButton>
        </ViewButtons>
        <StatusGroup $gap={0} $push={64}>
            <svg width="10" height="10" viewBox="0 0 10 10" stroke="#929396"><path d="M0 5.500h10"/></svg>
            <ZoomSlider type="range" min="0" max="100" defaultValue="3" aria-label="Zoom"/>
            <svg width="10" height="10" viewBox="0 0 10 10" stroke="#929396"><path d="M0 5.500h10M5.500 0v10"/></svg>
        </StatusGroup>
        <StatusGroup $gap={24} $push={21}>
            <svg width="16" height="16" viewBox="0 0 16 16" fill="#b3b4b6">
                <path d="M8 0l3.500 4H9v2H7V4H4.500zM8 16l3.500-4H9v-2H7v2H4.500zM0 8l4-3.500V7h2v2H4v2.500zM16 8l-4-3.500V7h-2v2h2v2.500z"/>
            </svg>
            <svg width="14" height="16" viewBox="0 0 14 16" fill="#3f4042">
                <path d="M7 0c1 0 1 1 1 1 3 0 4 3 4 6 0 2 0 3 2 4v2H0v-2c2-1 2-2 2-4 0-3 1-6 4-6 0 0 0-1 1-1zM5 14h4q0 2-2 2t-2-2z"/>
            </svg>
        </StatusGroup>
        <StatusGroup $gap={0} $push={13}>
            <svg width="14" height="12" viewBox="0 0 14 12" fill="#97989a">
                <path d="M8 1h2v2H8zM8 5h2v2H8zM4 5h2v2H4zM8 9h2v2H8zM4 9h2v2H4zM0 9h2v2H0z"/>
            </svg>
        </StatusGroup>
    </StatusBar>
);

export default function App() {
    return (
        <>
            <GlobalStyle/>
            <Window>
                <Header/>
                <RibbonArea/>
                <Body>
                    <GitPanel/>
                    <EditorArea/>
                </Body>
                <Status/>
            </Window>
        </>
    );
}
